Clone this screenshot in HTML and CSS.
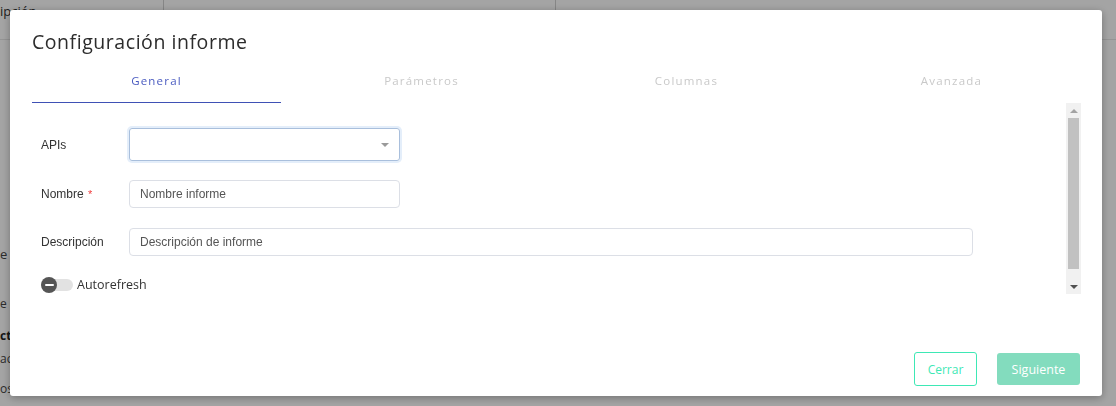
FILE: index.html
```html
<!DOCTYPE html>
<html lang="es">
<head>
<meta charset="utf-8">
<title>Configuración informe</title>
<link rel="stylesheet" href="styles.css">
</head>
<body>
<div class="page">
  <div class="page-head">
    <div class="ph-cell ph-first">ipción</div>
    <div class="ph-cell ph-second"></div>
    <div class="ph-cell"></div>
  </div>
  <div class="page-side">
    <div class="ps-item ps-a">e API</div>
    <div class="ps-item ps-b">e dato</div>
    <div class="ps-item ps-c">cti</div>
    <div class="ps-item ps-d">acción</div>
    <div class="ps-item ps-e">os</div>
  </div>
</div>

<div class="overlay">
  <div class="modal">
    <h1 class="modal-title">Configuración informe</h1>
    <div class="tabs">
      <div class="tab tab-active">General</div>
      <div class="tab">Parámetros</div>
      <div class="tab">Columnas</div>
      <div class="tab">Avanzada</div>
    </div>
    <div class="modal-body">
      <div class="form">
        <div class="row">
          <label class="label">APIs</label>
          <div class="select">
            <span class="caret"></span>
          </div>
        </div>
        <div class="row">
          <label class="label">Nombre <span class="req">*</span></label>
          <input class="input input-short" type="text" placeholder="Nombre informe">
        </div>
        <div class="row">
          <label class="label">Descripción</label>
          <input class="input input-long" type="text" placeholder="Descripción de informe">
        </div>
        <div class="row row-toggle">
          <span class="toggle"><span class="knob"><span class="knob-bar"></span></span></span>
          <span class="toggle-text">Autorefresh</span>
        </div>
      </div>
      <div class="scrollbar">
        <div class="sb-btn"><span class="sb-up"></span></div>
        <div class="sb-track"><div class="sb-thumb"></div></div>
        <div class="sb-btn sb-btn-down"><span class="sb-down"></span></div>
      </div>
    </div>
    <div class="modal-footer">
      <button class="btn btn-outline" type="button">Cerrar</button>
      <button class="btn btn-fill" type="button">Siguiente</button>
    </div>
  </div>
</div>
</body>
</html>
```

FILE: styles.css
```css
* { box-sizing: border-box; }

html, body {
  margin: 0;
  padding: 0;
  width: 1116px;
  height: 406px;
  overflow: hidden;
}

body {
  background: #ffffff;
  font-family: "Open Sans", "Liberation Sans", sans-serif;
  color: #303133;
}

/* underlying page */
.page {
  width: 1116px;
  height: 406px;
  background: #ffffff;
  overflow: hidden;
}

.page-head {
  display: flex;
  height: 40px;
  border-bottom: 1px solid #e6e6e6;
}

.ph-cell {
  font-size: 13px;
  color: #333;
  line-height: 22px;
}

.ph-first {
  width: 164px;
  border-right: 1px solid #d0d0d0;
}

.ph-second {
  width: 392px;
  border-right: 1px solid #d0d0d0;
}

.page-side {
  display: flex;
  flex-direction: column;
  padding-top: 206px;
  font-size: 12px;
  color: #444;
}

.ps-item {
  white-space: nowrap;
  line-height: 16px;
}

.ps-a { height: 50px; font-size: 13px; }
.ps-b { height: 32px; }
.ps-c { height: 23px; font-weight: bold; color: #222; }
.ps-d { height: 30px; }

/* overlay + modal */
.overlay {
  position: fixed;
  inset: 0;
  background: rgba(0, 0, 0, 0.355);
  padding: 10px 14px 10px 10px;
}

.modal {
  width: 1092px;
  height: 386px;
  background: #ffffff;
  border-radius: 3px;
  box-shadow: 0 2px 8px rgba(0, 0, 0, 0.3);
  padding: 20px 21px 10px 22px;
  display: flex;
  flex-direction: column;
}

.modal-title {
  margin: 0;
  font-family: "Open Sans", sans-serif;
  font-weight: 400;
  font-size: 19.5px;
  line-height: 24px;
  color: #2c2c2c;
  letter-spacing: 0.55px;
}

.tabs {
  display: flex;
  justify-content: space-between;
  margin-top: 16px;
  width: 1044px;
}

.tab {
  width: 249px;
  height: 33px;
  padding-top: 3px;
  text-align: center;
  font-family: "Open Sans", sans-serif;
  font-size: 11.5px;
  letter-spacing: 1.2px;
  color: #c9c9c9;
  border-bottom: 1px solid transparent;
}

.tab-active {
  color: #4a5bc0;
  border-bottom: 1px solid #3f51b5;
}

.modal-body {
  width: 1049px;
  height: 191px;
  overflow: hidden;
  display: flex;
}

.form {
  flex: 1;
  padding: 25px 0 0 9px;
  display: flex;
  flex-direction: column;
}

.row {
  display: flex;
  align-items: center;
  margin-bottom: 19px;
}

.row:nth-child(2), .row:nth-child(3) { margin-bottom: 20px; }
.row-toggle { margin-bottom: 0; }

.label {
  width: 88px;
  font-family: "Liberation Sans", Arial, sans-serif;
  font-size: 12px;
  color: #333;
}

.req {
  color: #f03d3d;
  font-size: 11px;
  margin-left: 1px;
}

.select {
  width: 271px;
  height: 33px;
  border: 1px solid #a9bfdc;
  border-radius: 3px;
  box-shadow: 0 0 0 2px #e4eefa;
  display: flex;
  align-items: center;
  justify-content: flex-end;
  padding-right: 10px;
}

.caret {
  width: 0;
  height: 0;
  border-left: 4px solid transparent;
  border-right: 4px solid transparent;
  border-top: 4px solid #9a9a9a;
}

.input {
  height: 28px;
  border: 1px solid #dcdfe6;
  border-radius: 4px;
  padding: 0 10px;
  font-family: "Liberation Sans", Arial, sans-serif;
  font-size: 12px;
  color: #333;
  outline: none;
  background: #fff;
}

.input::placeholder { color: #555; }

.input-short { width: 271px; }
.input-long { width: 844px; }

.toggle {
  position: relative;
  width: 32px;
  height: 16px;
  display: inline-flex;
  align-items: center;
}

.toggle::before {
  content: "";
  position: absolute;
  left: 8px;
  right: 0;
  top: 2px;
  height: 12px;
  border-radius: 6px;
  background: #e2e2e2;
}

.knob {
  position: relative;
  width: 16px;
  height: 16px;
  border-radius: 50%;
  background: #555555;
  display: flex;
  align-items: center;
  justify-content: center;
}

.knob-bar {
  width: 9px;
  height: 2px;
  background: #ffffff;
  border-radius: 1px;
}

.toggle-text {
  margin-left: 4px;
  font-family: "Open Sans", sans-serif;
  font-size: 12.5px;
  color: #333;
}

/* fake classic scrollbar */
.scrollbar {
  width: 15px;
  height: 191px;
  background: #f1f1f1;
  display: flex;
  flex-direction: column;
}

.sb-btn {
  height: 15px;
  display: flex;
  align-items: center;
  justify-content: center;
}

.sb-btn-down { height: 25px; padding-top: 10px; }

.sb-up {
  width: 0;
  height: 0;
  border-left: 4px solid transparent;
  border-right: 4px solid transparent;
  border-bottom: 4px solid #a3a3a3;
}

.sb-down {
  width: 0;
  height: 0;
  border-left: 4px solid transparent;
  border-right: 4px solid transparent;
  border-top: 4px solid #505050;
}

.sb-track {
  flex: 1;
  padding: 0 2px;
}

.sb-thumb {
  height: 151px;
  background: #c1c1c1;
}

.modal-footer {
  margin-top: auto;
  display: flex;
  justify-content: flex-end;
  align-items: center;
  gap: 20px;
  width: 1048px;
}

.btn {
  font-family: "Open Sans", sans-serif;
  font-size: 12px;
  border-radius: 3px;
  cursor: pointer;
}

.btn-outline {
  width: 63px;
  height: 34px;
  border: 1px solid #3ee8b5;
  background: #fff;
  color: #3ee8b5;
}

.btn-fill {
  width: 83px;
  height: 32px;
  border: none;
  background: #83dcbe;
  color: #ffffff;
  font-size: 12.5px;
}
```
